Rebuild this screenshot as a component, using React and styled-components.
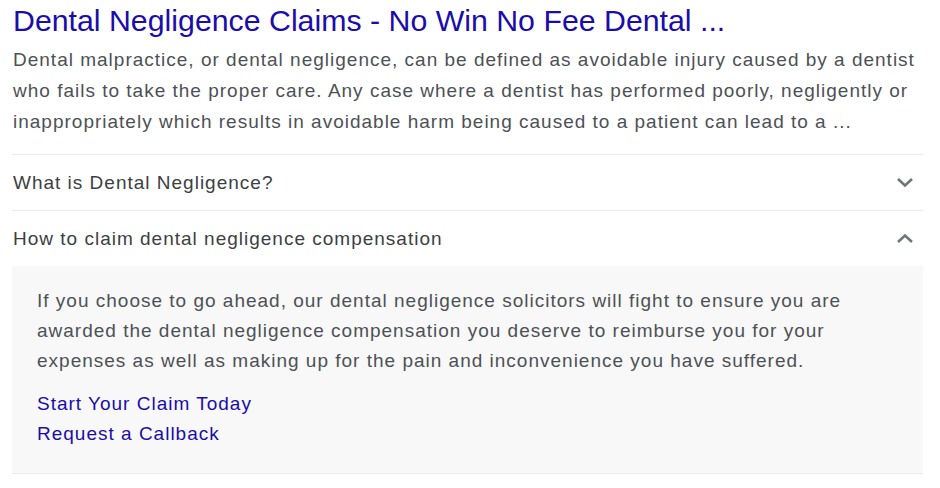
import styled, { createGlobalStyle } from "styled-components"

const GlobalStyle = createGlobalStyle`
body {
  margin: 0;
  background: #ffffff;
  font-family: Arial, "Liberation Sans", sans-serif;
}
`

const Result = styled.div`
width: 911px;
padding-left: 12px;
padding-top: 3px;
`
const Title = styled.a`
display: block;
padding-left: 1px;
font-size: 30.3px;
line-height: 36px;
color: #1a0dab;
text-decoration: none;
`
const Snippet = styled.p`
margin: 5px 0 17px;
padding-left: 1px;
font-size: 19px;
letter-spacing: 1px;
line-height: 31px;
color: #4d5156;
`
const Question = styled.div`
display: flex;
align-items: center;
justify-content: space-between;
height: 55px;
padding: 0 9px 0 1px;
border-top: 1px solid #ebebeb;
font-size: 19px;
letter-spacing: 1px;
color: #3c4043;
`
const Answer = styled.div`
padding: 20px 25px 24px;
background: #f8f8f8;
border-bottom: 1px solid #ebebeb;
`
const AnswerText = styled.p`
margin: 0 0 13px;
font-size: 19px;
letter-spacing: 1px;
line-height: 30px;
color: #4d5156;
`
const AnswerLink = styled.a`
display: block;
font-size: 19px;
letter-spacing: 1px;
line-height: 30px;
color: #1a0dab;
text-decoration: none;
`

const Chevron = ({ up }) => (
    <svg width="18" height="11" viewBox="0 0 18 11">
        <polyline
            points={up ? "2,9 9,2.5 16,9" : "2,2 9,8.5 16,2"}
            fill="none"
            stroke="#70757a"
            strokeWidth="2.6"
        />
    </svg>
)

const App = () => {
    return (
        <Result>
            <GlobalStyle />
            <Title href="#">Dental Negligence Claims - No Win No Fee Dental ...</Title>
            <Snippet>
                Dental malpractice, or dental negligence, can be defined as avoidable injury caused by a dentist
                who fails to take the proper care. Any case where a dentist has performed poorly, negligently or
                inappropriately which results in avoidable harm being caused to a patient can lead to a ...
            </Snippet>
            <Question>
                <span>What is Dental Negligence?</span>
                <Chevron />
            </Question>
            <Question>
                <span>How to claim dental negligence compensation</span>
                <Chevron up />
            </Question>
            <Answer>
                <AnswerText>
                    If you choose to go ahead, our dental negligence solicitors will fight to ensure you are
                    awarded the dental negligence compensation you deserve to reimburse you for your
                    expenses as well as making up for the pain and inconvenience you have suffered.
                </AnswerText>
                <AnswerLink href="#">Start Your Claim Today</AnswerLink>
                <AnswerLink href="#">Request a Callback</AnswerLink>
            </Answer>
        </Result>
    )
}

export default App
